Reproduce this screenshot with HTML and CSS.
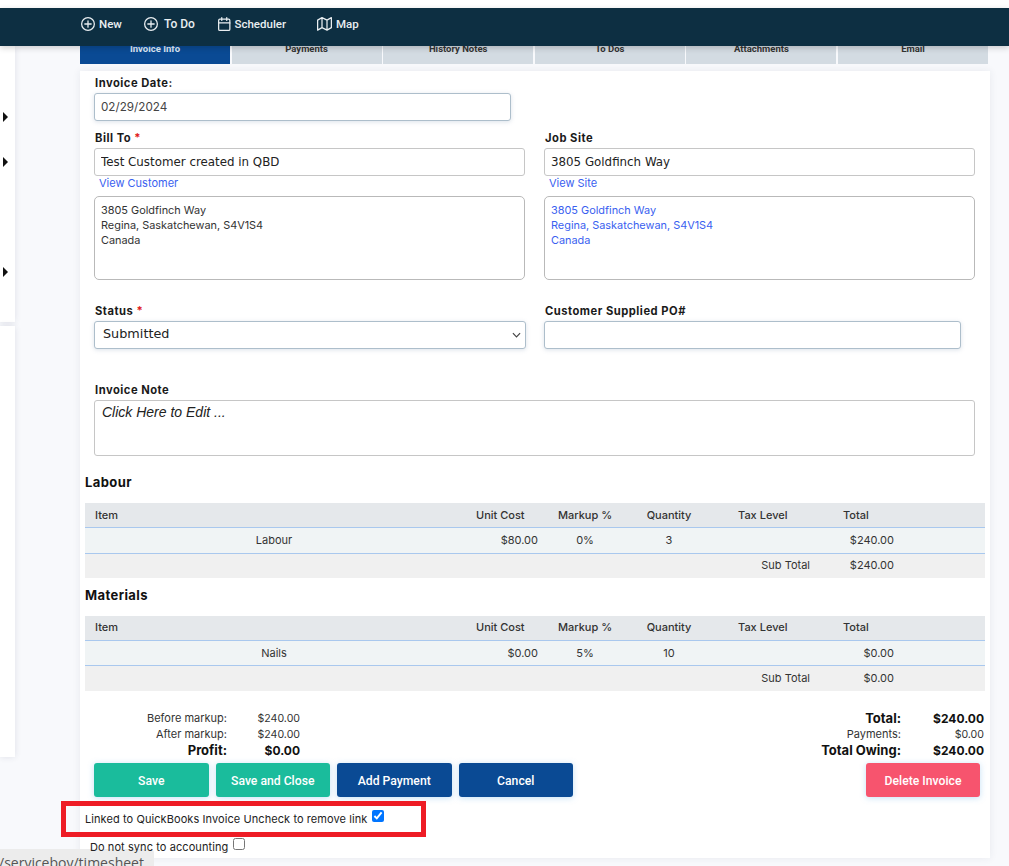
FILE: index.html
```html
<!DOCTYPE html>
<html lang="en">
<head>
<meta charset="utf-8">
<title>Invoice</title>
<link rel="stylesheet" href="styles.css">
</head>
<body>
<div class="topgap"></div>
<nav class="nav">
  <a class="nav-item"><svg class="ico ico-plus" viewBox="1 1 22 22"><circle cx="12" cy="12" r="10"/><path d="M12 7v10M7 12h10"/></svg><span>New</span></a>
  <a class="nav-item todo"><svg class="ico ico-plus" viewBox="1 1 22 22"><circle cx="12" cy="12" r="10"/><path d="M12 7v10M7 12h10"/></svg><span>To Do</span></a>
  <a class="nav-item"><svg class="ico ico-cal" viewBox="2 .5 20 22.5"><rect x="3" y="4" width="18" height="18" rx="2"/><path d="M16 1.5V6M8 1.5V6M3 10h18"/></svg><span>Scheduler</span></a>
  <a class="nav-item"><svg class="ico ico-map" viewBox="0 1 24 22"><path d="M1 6v16l7-4 8 4 7-4V2l-7 4-8-4-7 4zM8 2v16M16 6v16"/></svg><span>Map</span></a>
</nav>
<div class="layout">
  <aside class="side">
    <div class="panel panel-a">
      <i class="tri tri-1"></i>
      <i class="tri tri-2"></i>
      <i class="tri tri-3"></i>
    </div>
    <div class="panel panel-b"></div>
  </aside>
  <main class="main">
    <div class="tabs">
      <div class="tab active">Invoice Info</div>
      <div class="tab">Payments</div>
      <div class="tab">History Notes</div>
      <div class="tab">To Dos</div>
      <div class="tab">Attachments</div>
      <div class="tab">Email</div>
    </div>
    <section class="card">
      <div class="form">
        <label class="lbl first">Invoice Date:</label>
        <input class="field tinted date-field" type="text" value="02/29/2024">
        <div class="two">
          <div class="col">
            <label class="lbl">Bill To <b class="req">*</b></label>
            <input class="field plain" type="text" value="Test Customer created in QBD">
            <a class="view">View Customer</a>
            <div class="addr">3805 Goldfinch Way<br>Regina, Saskatchewan, S4V1S4<br>Canada</div>
          </div>
          <div class="col">
            <label class="lbl">Job Site</label>
            <input class="field plain" type="text" value="3805 Goldfinch Way">
            <a class="view">View Site</a>
            <div class="addr link">3805 Goldfinch Way<br>Regina, Saskatchewan, S4V1S4<br>Canada</div>
          </div>
        </div>
        <div class="two status-row">
          <div class="col">
            <label class="lbl">Status <b class="req">*</b></label>
            <div class="select-wrap">
              <select class="field tinted select"><option>Submitted</option></select>
              <svg class="chev" viewBox="0 0 10 6"><path d="M1 1l4 4 4-4"/></svg>
            </div>
          </div>
          <div class="col">
            <label class="lbl">Customer Supplied PO#</label>
            <input class="field tinted po" type="text">
          </div>
        </div>
        <label class="lbl note-lbl">Invoice Note</label>
        <div class="note">Click Here to Edit ...</div>
      </div>

      <h3 class="sec sec-labour">Labour</h3>
      <table class="tbl tbl-a">
        <colgroup><col class="w1"><col class="w2"><col class="w3"><col class="w4"><col class="w5"><col class="w6"><col></colgroup>
        <thead><tr><th class="th-item">Item</th><th class="th-unit">Unit Cost</th><th class="ctr">Markup %</th><th class="ctr">Quantity</th><th class="th-tax">Tax Level</th><th class="th-total">Total</th><th></th></tr></thead>
        <tbody>
          <tr class="row"><td class="ctr">Labour</td><td class="num">$80.00</td><td class="ctr">0%</td><td class="ctr">3</td><td></td><td class="num">$240.00</td><td></td></tr>
          <tr class="sub"><td></td><td></td><td></td><td></td><td class="num">Sub Total</td><td class="num">$240.00</td><td></td></tr>
        </tbody>
      </table>

      <h3 class="sec sec-mat">Materials</h3>
      <table class="tbl tbl-b">
        <colgroup><col class="w1"><col class="w2"><col class="w3"><col class="w4"><col class="w5"><col class="w6"><col></colgroup>
        <thead><tr><th class="th-item">Item</th><th class="th-unit">Unit Cost</th><th class="ctr">Markup %</th><th class="ctr">Quantity</th><th class="th-tax">Tax Level</th><th class="th-total">Total</th><th></th></tr></thead>
        <tbody>
          <tr class="row"><td class="ctr">Nails</td><td class="num">$0.00</td><td class="ctr">5%</td><td class="ctr">10</td><td></td><td class="num">$0.00</td><td></td></tr>
          <tr class="sub"><td></td><td></td><td></td><td></td><td class="num">Sub Total</td><td class="num">$0.00</td><td></td></tr>
        </tbody>
      </table>

      <div class="totals">
        <dl class="sum sum-left">
          <dt>Before markup:</dt><dd>$240.00</dd>
          <dt>After markup:</dt><dd>$240.00</dd>
          <dt class="big">Profit:</dt><dd class="big">$0.00</dd>
        </dl>
        <dl class="sum sum-right">
          <dt class="big">Total:</dt><dd class="big">$240.00</dd>
          <dt>Payments:</dt><dd>$0.00</dd>
          <dt class="big">Total Owing:</dt><dd class="big">$240.00</dd>
        </dl>
      </div>

      <div class="actions">
        <button class="btn green">Save</button>
        <button class="btn green">Save and Close</button>
        <button class="btn blue">Add Payment</button>
        <button class="btn blue">Cancel</button>
        <button class="btn red">Delete Invoice</button>
      </div>

      <div class="check check-1"><span>Linked to QuickBooks Invoice Uncheck to remove link</span><input type="checkbox" checked></div>
      <div class="check check-2"><span>Do not sync to accounting</span><input type="checkbox"></div>
    </section>
  </main>
</div>
<div class="annot"></div>
<div class="status-bubble">/serviceboy/timesheet</div>
</body>
</html>
```
FILE: styles.css
```css
* { box-sizing: border-box; }
html, body { margin: 0; padding: 0; }
body {
  position: relative;
  width: 1009px;
  height: 866px;
  overflow: hidden;
  background: #f8f9fc;
  font-family: "Inter", "Open Sans", sans-serif;
  font-size: 11px;
  color: #222;
}
.topgap { height: 8px; background: #fff; }
.nav {
  position: relative;
  z-index: 5;
  height: 38px;
  padding: 0 0 0 81px;
  background: #0d2f42;
  box-shadow: 0 2px 6px rgba(0, 0, 0, .18);
  display: grid;
  grid-template-columns: 63px 74px 99px auto;
  align-items: center;
  color: #e9eef1;
  font: 500 11.5px "Roboto", sans-serif;
}
.nav-item { display: flex; align-items: center; gap: 4px; padding-bottom: 6px; }
.nav-item.todo { gap: 6px; font-size: 12px; }
.ico { flex: none; fill: none; stroke: currentColor; stroke-width: 2; stroke-linecap: round; stroke-linejoin: round; }
.ico-plus { width: 14px; height: 14px; }
.ico-cal { width: 12.5px; height: 14px; }
.ico-map { width: 15px; height: 13.75px; }
.layout { display: flex; align-items: flex-start; }
.side { width: 15px; flex: none; display: flex; flex-direction: column; gap: 4px; }
.panel { background: #fff; box-shadow: 0 0 6px rgba(40, 50, 80, .12); }
.panel-a { height: 276px; display: flex; flex-direction: column; }
.panel-b { height: 431px; }
.tri { width: 0; height: 0; margin-left: 3px; border-left: 5px solid #111; border-top: 5px solid transparent; border-bottom: 5px solid transparent; }
.tri-1 { margin-top: 66px; }
.tri-2 { margin-top: 35px; }
.tri-3 { margin-top: 100px; }
.main { margin-left: 65px; width: 910px; }
.tabs { display: flex; margin-top: -8px; width: 908px; justify-content: space-between; }
.tab {
  width: 150px;
  height: 26px;
  background: #d3dbe2;
  color: #333;
  text-align: center;
  font: 700 9.5px/21px "Roboto", sans-serif;
}
.tab.active { background: #0a4a94; color: #dfe9f5; }
.card { margin-top: 7px; height: 787px; padding: 4px 5px 0; background: #fff; box-shadow: 0 0 8px rgba(40, 50, 80, .08); }
.form { padding: 0 10px 0 9px; }
.lbl { display: block; height: 16px; margin: 9px 0 2px; padding-left: 1px; font: 700 11.2px/16px "Inter", sans-serif; letter-spacing: .5px; color: #1a1a1a; white-space: nowrap; }
.lbl.first { margin-top: 0; }
.req { color: #e01b1b; font-weight: 700; }
.field { display: block; height: 28px; width: 100%; margin: 0; padding: 0 6px; background: #fff; border-radius: 3px; color: #222; outline: 0; }
.plain { border: 1px solid #c6c6c6; font: 11.85px "DejaVu Sans", sans-serif; }
.tinted { border: 1px solid #adbecb; box-shadow: 0 1px 4px rgba(110, 140, 170, .25); }
.date-field { width: 417px; padding-bottom: 1px; font: 11.7px "Inter", sans-serif; color: #444; }
.two { display: flex; gap: 19px; width: 881px; }
.col { width: 431px; flex: none; }
.view { display: block; height: 14px; margin-left: 5px; color: #3a5ff0; font: 11px/14px "Inter", sans-serif; }
.addr { height: 84px; margin-top: 6px; padding: 6px 6px; border: 1px solid #b9b9b9; border-radius: 5px; font: 10.9px/15px "Inter", sans-serif; color: #333; }
.addr.link { color: #3a5ff0; }
.status-row { margin-top: 23px; }
.status-row .lbl { margin-top: 0; }
.select-wrap { position: relative; width: 432px; }
.select { appearance: none; padding: 0 8px 3px; font: 12.8px "DejaVu Sans", sans-serif; }
.chev { position: absolute; right: 5px; top: 11px; width: 9px; height: 6px; fill: none; stroke: #444; stroke-width: 1.3; }
.po { width: 417px; }
.note-lbl { margin-top: 33px; }
.note { height: 56px; padding: 2px 7px; border: 1px solid #c6c6c6; border-radius: 3px; font: italic 14px/18px "Liberation Sans", sans-serif; color: #222; }
.sec { margin: 0 0 11px; height: 20px; font: 700 13px/20px "Inter", sans-serif; letter-spacing: .4px; color: #111; }
.sec-labour { margin-top: 16px; }
.sec-mat { margin-top: 7px; }
.tbl { width: 900px; table-layout: fixed; border-collapse: separate; border-spacing: 0; font: 11px "Inter", sans-serif; color: #333; }
.w1 { width: 378px; }
.w2 { width: 85px; }
.w3 { width: 74px; }
.w4 { width: 94px; }
.w5 { width: 104px; }
.w6 { width: 84px; }
.tbl th { height: 25px; padding: 0; background: #e5e8eb; border-bottom: 1px solid #a9c8ee; font-weight: 500; text-align: left; color: #333; }
.tbl td { padding: 0; }
.tbl-a td, .tbl-b .sub td { padding-bottom: 2px; }
.tbl-b th { padding-bottom: 2px; }
.tbl .ctr { text-align: center; }
.tbl .num { padding-right: 10px; text-align: right; }
.th-item { padding-left: 10px !important; }
.th-unit { padding-left: 13px !important; }
.th-tax { padding-left: 22px !important; }
.th-total { padding-left: 23px !important; }
.row td { background: #f0f4f5; border-bottom: 1px solid #a9c8ee; }
.sub td { background: #f0f0f0; }
.tbl-a .row td { height: 26px; }
.tbl-a .sub td { height: 24px; }
.tbl-b .row td, .tbl-b .sub td { height: 25px; }
.totals { display: flex; justify-content: space-between; width: 899px; margin-top: 19px; padding-left: 9px; }
.sum { display: grid; margin: 0; grid-auto-rows: 16px; align-items: center; font-size: 11px; color: #333; }
.sum-left { grid-template-columns: 133px 73px; }
.sum-right { grid-template-columns: 130px 83px; }
.sum dt, .sum dd { margin: 0; text-align: right; white-space: nowrap; }
.sum dd { font-size: 10.6px; }
.sum .big { font-size: 13px; font-weight: 700; color: #111; }
.sum dd.big { font-size: 12px; }
.actions { display: flex; gap: 7px; width: 886px; margin: 5px 0 0 9px; }
.btn { width: 114.5px; height: 34px; padding: 2px 0 0; border: 0; border-radius: 3px; color: #fff; font: 500 12.2px "Roboto", sans-serif; box-shadow: 0 1px 6px rgba(90, 170, 230, .35); }
.btn.green { background: #1abc9c; }
.btn.blue { background: #0a4a94; }
.btn.red { width: 114px; margin-left: auto; background: #f7546e; }
.check { display: flex; align-items: center; height: 16px; padding-top: 1px; font-size: 11px; letter-spacing: .08px; color: #222; white-space: nowrap; }
.check input { width: 12px; height: 12px; margin: -6px 0 0 5px; }
.check-1 { margin-top: 13px; }
.check-2 { position: relative; z-index: 1; margin: 12px 0 0 5px; }
.annot { position: absolute; left: 61px; top: 801px; width: 365px; height: 36px; border: 5px solid #ee1c25; pointer-events: none; }
.status-bubble { position: absolute; left: -1px; top: 849px; width: 155px; height: 17px; padding: 7px 0 0 0; overflow: hidden; background: #ececec; border-top-right-radius: 4px; color: #555; font: 14px/14px "Open Sans", sans-serif; white-space: nowrap; }
```
